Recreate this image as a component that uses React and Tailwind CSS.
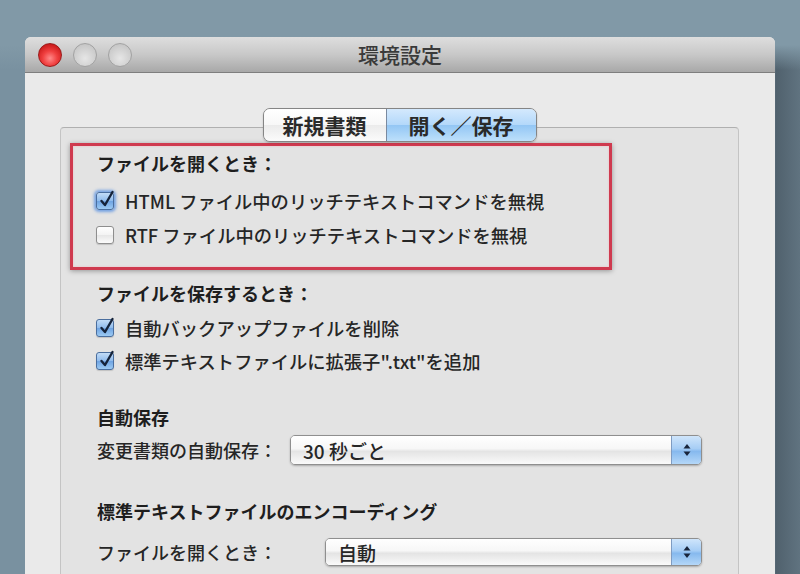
import React from "react";

const font = { fontFamily: '"Noto Sans CJK JP", "Noto Sans", sans-serif' };

function Check({ checked, focus }) {
  return (
    <div
      className={
        "relative w-[18px] h-[18px] shrink-0 rounded-[3px] border " +
        (checked
          ? "border-[#4a6e9e] bg-[linear-gradient(180deg,#c2dcf7_0%,#8fbbec_50%,#6ea3e2_51%,#9ccaf3_100%)]"
          : "border-[#8e8e8e] bg-[linear-gradient(180deg,#ffffff_0%,#f3f3f3_50%,#e6e6e6_51%,#fbfbfb_100%)]") +
        (focus ? " shadow-[0_0_3px_2px_rgba(80,140,225,0.75)]" : " shadow-[0_1px_1px_rgba(0,0,0,0.15)]")
      }
    >
      {checked && (
        <svg className="absolute left-[1px] top-[-4px]" width="18" height="20" viewBox="0 0 18 20">
          <path d="M3.5 12 L7 16 L14.5 3" fill="none" stroke="#15233a" strokeWidth="2.4" strokeLinecap="round" strokeLinejoin="round" />
        </svg>
      )}
    </div>
  );
}

function Row({ checked, focus, children, className = "" }) {
  return (
    <div className={"flex items-center gap-[11px] h-[24px] -ml-[1px] " + className}>
      <Check checked={checked} focus={focus} />
      <span className="text-[18.3px] leading-none text-[#262626] font-medium whitespace-nowrap">{children}</span>
    </div>
  );
}

function Popup({ value, w, h }) {
  return (
    <div
      className={
        "flex items-stretch rounded-[5px] border border-[#8f8f8f] shadow-[0_1px_2px_rgba(0,0,0,0.25)] overflow-hidden " + w + " " + h
      }
    >
      <div className="flex-1 flex items-center pl-[12px] bg-[linear-gradient(180deg,#ffffff_0%,#f7f7f7_45%,#e4e4e4_55%,#fafafa_100%)]">
        <span className="text-[19px] leading-none font-medium text-[#262626]">{value}</span>
      </div>
      <div className="w-[30px] flex items-center justify-center border-l border-[#7f9cc2] bg-[linear-gradient(180deg,#cfe5fb_0%,#a6cdf5_45%,#86b9ee_55%,#b4d7f8_100%)]">
        <svg width="10" height="16" viewBox="0 0 10 16">
          <path d="M5 2 L8.5 6.5 L1.5 6.5 Z" fill="#18243a" />
          <path d="M5 14 L8.5 9.5 L1.5 9.5 Z" fill="#18243a" />
        </svg>
      </div>
    </div>
  );
}

function Light({ red }) {
  return (
    <div
      className={
        "w-[24px] h-[24px] rounded-full border " +
        (red
          ? "border-[#9a1c1c] bg-[radial-gradient(circle_at_50%_65%,#ff8a8a_0%,#f04040_40%,#c81818_80%,#a01010_100%)]"
          : "border-[#a2a2a2] bg-[radial-gradient(circle_at_50%_65%,#e6e6e6_0%,#d2d2d2_50%,#bdbdbd_100%)]")
      }
    />
  );
}

export default function App() {
  return (
    <div
      style={font}
      className="w-[800px] h-[574px] overflow-hidden pt-[37px] pl-[25px] bg-[linear-gradient(180deg,#8199a7_0px,#8199a7_45px,rgba(129,153,167,0)_70px),linear-gradient(90deg,#7991a0_0%,#7991a0_96.5%,#50616d_97%,#607380_100%)]"
    >
      <div className="w-[750px] h-[560px] rounded-t-[6px] overflow-hidden flex flex-col bg-[#e9e9e9]">
        {/* title bar */}
        <div className="relative h-[36px] shrink-0 flex items-center pl-[13px] gap-[11px] border-b border-[#7e7e7e] bg-[linear-gradient(180deg,#dedede_0%,#c8c8c8_50%,#a8a8a8_100%)]">
          <Light red />
          <Light />
          <Light />
          <div className="absolute inset-0 flex items-center justify-center pointer-events-none">
            <span className="text-[21px] leading-none font-medium text-[#3a3a3a]">環境設定</span>
          </div>
        </div>

        {/* content */}
        <div className="flex-1 pt-[35px] pl-[35px] pr-[36px] bg-[#eaeaea]">
          {/* tabs */}
          <div className="relative z-10 flex justify-center">
            <div className="flex h-[34px] rounded-[7px] border border-[#858585] overflow-hidden shadow-[0_1px_2px_rgba(0,0,0,0.2)]">
              <div className="w-[123px] flex items-center justify-center bg-[linear-gradient(180deg,#ffffff_0%,#f7f7f7_50%,#ebebeb_51%,#fbfbfb_100%)] border-r border-[#7a8aa0]">
                <span className="text-[21px] leading-none font-bold text-[#2a2a2a]">新規書類</span>
              </div>
              <div className="w-[149px] flex items-center justify-center bg-[linear-gradient(180deg,#d4e9fd_0%,#b3d8fa_50%,#93c6f4_51%,#bde0fb_100%)]">
                <span className="text-[21px] leading-none font-bold text-[#2a2a2a]">開く／保存</span>
              </div>
            </div>
          </div>

          {/* group box */}
          <div className="-mt-[15px] h-[480px] rounded-[4px] border border-[#c4c4c4] border-t-[#b0b0b0] bg-[#e3e3e3]">
            <div className="ml-[9px] mt-[15px] w-[542px] border-[3px] border-[#cf3a4f] shadow-[0_1px_5px_rgba(0,0,0,0.35),inset_0_0_2px_rgba(255,150,160,0.6)] pl-[24px] pt-[5px] pb-[20px]">
              <div className="h-[24px] flex items-center">
                <span className="text-[18px] leading-none font-bold text-[#1e1e1e]">ファイルを開くとき：</span>
              </div>
              <Row checked focus className="mt-[14px]">HTML ファイル中のリッチテキストコマンドを無視</Row>
              <Row className="mt-[10px]">RTF ファイル中のリッチテキストコマンドを無視</Row>
            </div>

            <div className="pl-[36px]">
              <div className="mt-[11px] h-[24px] flex items-center">
                <span className="text-[18px] leading-none font-bold text-[#1e1e1e]">ファイルを保存するとき：</span>
              </div>
              <Row checked className="mt-[11px]">自動バックアップファイルを削除</Row>
              <Row checked className="mt-[9px]">標準テキストファイルに拡張子".txt"を追加</Row>

              <div className="mt-[32px] h-[24px] flex items-center">
                <span className="text-[18px] leading-none font-bold text-[#1e1e1e]">自動保存</span>
              </div>
              <div className="mt-[6px] flex items-center">
                <span className="w-[193px] text-[18px] leading-none font-medium text-[#262626]">変更書類の自動保存：</span>
                <Popup value="30 秒ごと" w="w-[412px]" h="h-[30px]" />
              </div>

              <div className="mt-[34px] h-[24px] flex items-center">
                <span className="text-[18px] leading-none font-bold text-[#1e1e1e]">標準テキストファイルのエンコーディング</span>
              </div>
              <div className="mt-[15px] flex items-center">
                <span className="w-[228px] text-[18px] leading-none font-medium text-[#262626]">ファイルを開くとき：</span>
                <Popup value="自動" w="w-[377px]" h="h-[28px]" />
              </div>
            </div>
          </div>
        </div>
      </div>
    </div>
  );
}
